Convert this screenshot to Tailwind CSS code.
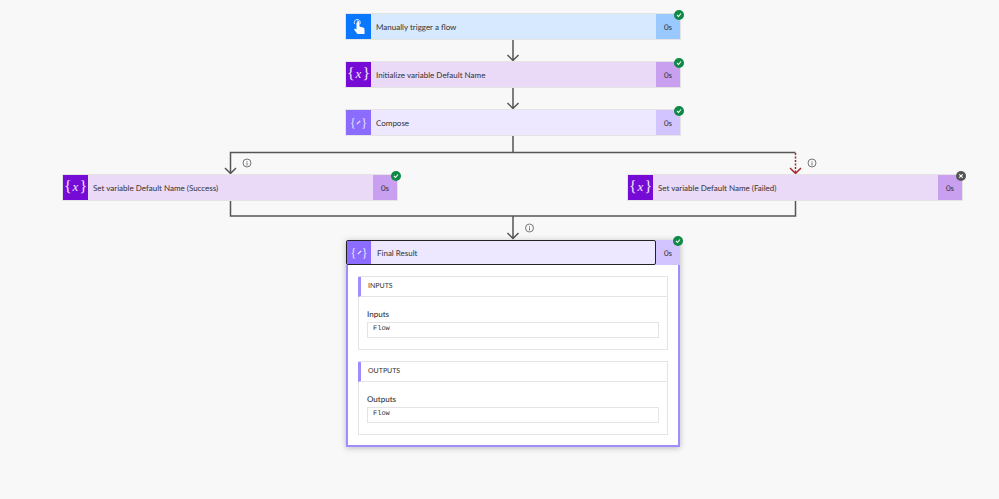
<!DOCTYPE html>
<html lang="en">
<head>
  <meta charset="UTF-8" />
  <title>Flow run</title>
  <script src="https://cdn.jsdelivr.net/npm/@tailwindcss/browser@4"></script>
</head>
<body class="bg-[#f8f8f8]">
  <div class="relative w-[999px] h-[499px] overflow-hidden font-['Lato',sans-serif] text-[8px] text-[#333] [text-rendering:geometricPrecision]">

    <!-- connectors -->
    <svg class="absolute left-0 top-0" width="999" height="499" fill="none" stroke="#555" stroke-width="1.5">
      <path d="M513 39V60M507.500 55L513 60.500L518.500 55"/>
      <path d="M513 87V108M507.500 103L513 108.500L518.500 103"/>
      <path d="M513 135V152.500"/>
      <path d="M795.500 152.500H230.500V173M225 168L230.500 173.500L236 168"/>
      <path d="M230.500 200V216H795.500V200"/>
      <path d="M513 216V238M507.500 233L513 238.500L518.500 233"/>
      <path d="M795.500 153V173" stroke="#a4262c" stroke-dasharray="2 1.500"/>
      <path d="M790 168L795.500 173.500L801 168" stroke="#a4262c"/>
      <g stroke="#777" stroke-width="1">
        <circle cx="247" cy="163" r="4"/><path d="M247 161V161.800M247 162.500V165.500"/>
        <circle cx="812" cy="163" r="4"/><path d="M812 161V161.800M812 162.500V165.500"/>
        <circle cx="529.500" cy="228" r="4"/><path d="M529.500 226V226.800M529.500 227.500V230.500"/>
      </g>
    </svg>

    <div class="relative flex flex-col">
      <!-- trigger -->
      <div class="ml-[346px] mt-[14px] relative flex w-[334px] h-[25px] shadow-[0_0_0_1px_#e4e4e4] bg-[#d7e9ff]">
        <div class="w-[25px] bg-[#0a77ff] flex items-center justify-center">
          <svg width="14" height="16" viewBox="0 0 14 16" fill="#fff">
            <path d="M5 1.500a2.500 2.500 0 0 1 2.500 2.500v3.500l3.500 1c1 .3 1.500 1 1.500 2V15H5.500L2 10.500l1-1 1.500 1V4a.7.7 0 0 1 1.400 0z"/>
            <path d="M2.600 5A3.200 3.200 0 0 1 5 .400 3.200 3.200 0 0 1 8 5" fill="none" stroke="#fff" stroke-width=".8"/>
          </svg>
        </div>
        <div class="flex-1 flex items-center pl-[5px] pt-[1px]">Manually trigger a flow</div>
        <div class="w-[24px] bg-[#99c9ff] flex items-center justify-center pt-[1px]">0s</div>
        <span class="absolute -right-[4px] -top-[4px] w-[10px] h-[10px] rounded-full bg-[#0f8a46] flex items-center justify-center">
          <svg width="6" height="6" viewBox="0 0 6 6" fill="none" stroke="#fff" stroke-width="1.100"><path d="M1 3L2.500 4.500L5 1.500"/></svg>
        </span>
      </div>

      <!-- initialize variable -->
      <div class="ml-[346px] mt-[23px] relative flex w-[334px] h-[25px] shadow-[0_0_0_1px_#e4e4e4] bg-[#ebdaf7]">
        <div class="w-[25px] bg-[#770bd6] flex items-center justify-center text-[#f0e4fb] text-[16px] font-['Liberation_Serif',serif] leading-none"><span class="-mt-[2px]">{<i class="text-[13px] px-[1px]">x</i>}</span></div>
        <div class="flex-1 flex items-center pl-[5px] pt-[1px]">Initialize variable Default Name</div>
        <div class="w-[24px] bg-[#c99fef] flex items-center justify-center pt-[1px]">0s</div>
        <span class="absolute -right-[4px] -top-[4px] w-[10px] h-[10px] rounded-full bg-[#0f8a46] flex items-center justify-center">
          <svg width="6" height="6" viewBox="0 0 6 6" fill="none" stroke="#fff" stroke-width="1.100"><path d="M1 3L2.500 4.500L5 1.500"/></svg>
        </span>
      </div>

      <!-- compose -->
      <div class="ml-[346px] mt-[23px] relative flex w-[334px] h-[25px] shadow-[0_0_0_1px_#e4e4e4] bg-[#ede8ff]">
        <div class="w-[25px] bg-[#8c6cff] flex items-center justify-center text-[#e6dfff] text-[13px] font-['Liberation_Serif',serif] leading-none">
          <span class="-mt-[1px]">{</span><svg width="5" height="5" viewBox="0 0 6 6" stroke="#efeaff" stroke-width="1.500"><path d="M1 5L5 1"/></svg><span class="-mt-[1px]">}</span>
        </div>
        <div class="flex-1 flex items-center pl-[5px] pt-[1px]">Compose</div>
        <div class="w-[24px] bg-[#d1c4ff] flex items-center justify-center pt-[1px]">0s</div>
        <span class="absolute -right-[4px] -top-[4px] w-[10px] h-[10px] rounded-full bg-[#0f8a46] flex items-center justify-center">
          <svg width="6" height="6" viewBox="0 0 6 6" fill="none" stroke="#fff" stroke-width="1.100"><path d="M1 3L2.500 4.500L5 1.500"/></svg>
        </span>
      </div>

      <!-- branches -->
      <div class="mt-[40px] ml-[63px] flex gap-[231px]">
        <div class="relative flex w-[334px] h-[25px] shadow-[0_0_0_1px_#e4e4e4] bg-[#ebdaf7]">
          <div class="w-[25px] bg-[#770bd6] flex items-center justify-center text-[#f0e4fb] text-[16px] font-['Liberation_Serif',serif] leading-none"><span class="-mt-[2px]">{<i class="text-[13px] px-[1px]">x</i>}</span></div>
          <div class="flex-1 flex items-center pl-[5px] pt-[1px]">Set variable Default Name (Success)</div>
          <div class="w-[24px] bg-[#c99fef] flex items-center justify-center pt-[1px]">0s</div>
          <span class="absolute -right-[4px] -top-[4px] w-[10px] h-[10px] rounded-full bg-[#0f8a46] flex items-center justify-center">
            <svg width="6" height="6" viewBox="0 0 6 6" fill="none" stroke="#fff" stroke-width="1.100"><path d="M1 3L2.500 4.500L5 1.500"/></svg>
          </span>
        </div>
        <div class="relative flex w-[334px] h-[25px] shadow-[0_0_0_1px_#e4e4e4] bg-[#ebdaf7]">
          <div class="w-[25px] bg-[#770bd6] flex items-center justify-center text-[#f0e4fb] text-[16px] font-['Liberation_Serif',serif] leading-none"><span class="-mt-[2px]">{<i class="text-[13px] px-[1px]">x</i>}</span></div>
          <div class="flex-1 flex items-center pl-[5px] pt-[1px]">Set variable Default Name (Failed)</div>
          <div class="w-[24px] bg-[#c99fef] flex items-center justify-center pt-[1px]">0s</div>
          <span class="absolute -right-[4px] -top-[4px] w-[10px] h-[10px] rounded-full bg-[#555] flex items-center justify-center">
            <svg width="6" height="6" viewBox="0 0 6 6" fill="none" stroke="#fff" stroke-width="1.100"><path d="M1.300 1.300L4.700 4.700M4.700 1.300L1.300 4.700"/></svg>
          </span>
        </div>
      </div>

      <!-- final result -->
      <div class="ml-[346px] mt-[40px] relative w-[334px] h-[207px] border-2 border-t-0 border-[#a08cff] bg-white shadow-[0_1px_6px_rgba(0,0,0,0.25)]">
        <div class="flex h-[25px] -mx-[2px] bg-[#d1c4ff]">
          <div class="flex-1 flex rounded-[2px] border-[1.500px] border-[#222] bg-[#ede8ff] overflow-hidden">
            <div class="w-[24px] bg-[#8c6cff] flex items-center justify-center text-[#e6dfff] text-[13px] font-['Liberation_Serif',serif] leading-none">
              <span class="-mt-[1px]">{</span><svg width="5" height="5" viewBox="0 0 6 6" stroke="#efeaff" stroke-width="1.500"><path d="M1 5L5 1"/></svg><span class="-mt-[1px]">}</span>
            </div>
            <div class="flex-1 flex items-center pl-[6px] pt-[1px]">Final Result</div>
          </div>
          <div class="w-[24px] flex items-center justify-center pt-[1px]">0s</div>
        </div>
        <span class="absolute -right-[5px] -top-[4px] w-[10px] h-[10px] rounded-full bg-[#0f8a46] flex items-center justify-center">
          <svg width="6" height="6" viewBox="0 0 6 6" fill="none" stroke="#fff" stroke-width="1.100"><path d="M1 3L2.500 4.500L5 1.500"/></svg>
        </span>

        <div class="ml-[10px] mr-[10px] mt-[11px] flex flex-col gap-[11px]">
          <section class="h-[74px] border border-[#e4e4e4]">
            <div class="h-[20px] border-b border-b-[#e4e4e4] border-l-[3px] border-l-[#a08cff] -ml-px flex items-center pl-[7px] text-[7px]">INPUTS</div>
            <div class="mt-[10px] ml-[8px] leading-[14px] font-medium">Inputs</div>
            <div class="mt-[1px] ml-[8px] mr-[8px] h-[16px] border border-[#e4e4e4] pl-[5px] font-['Liberation_Mono',monospace] text-[7px] leading-[12px]">Flow</div>
          </section>
          <section class="h-[74px] border border-[#e4e4e4]">
            <div class="h-[20px] border-b border-b-[#e4e4e4] border-l-[3px] border-l-[#a08cff] -ml-px flex items-center pl-[7px] text-[7px]">OUTPUTS</div>
            <div class="mt-[10px] ml-[8px] leading-[14px] font-medium">Outputs</div>
            <div class="mt-[1px] ml-[8px] mr-[8px] h-[16px] border border-[#e4e4e4] pl-[5px] font-['Liberation_Mono',monospace] text-[7px] leading-[12px]">Flow</div>
          </section>
        </div>
      </div>
    </div>
  </div>
</body>
</html>
